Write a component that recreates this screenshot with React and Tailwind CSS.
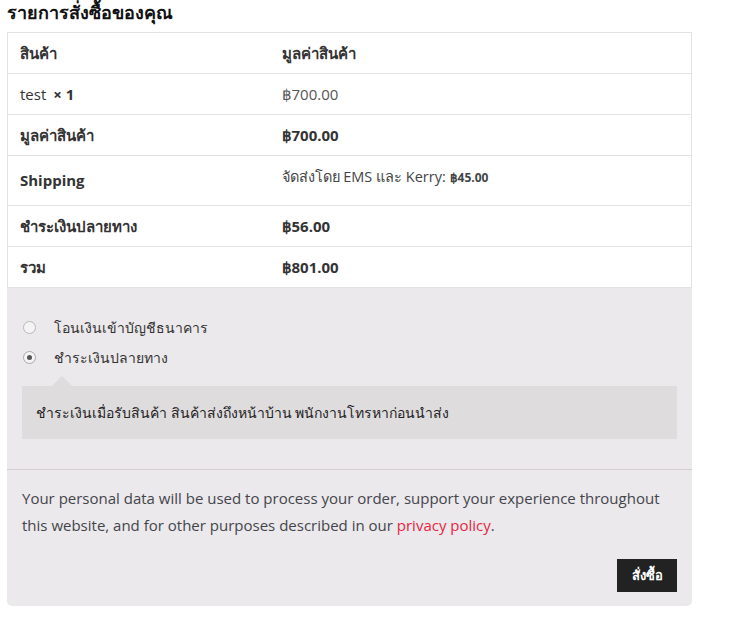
import React from "react";

const rows = [
  { label: "มูลค่าสินค้า", value: "฿700.00" },
];

export default function App() {
  return (
    <div
      className="w-[734px] h-[633px] bg-white text-[#333333]"
      style={{ fontFamily: '"Open Sans", "Noto Sans", sans-serif' }}
    >
      <div className="pl-[7px] w-[692px]">
        {/* Heading */}
        <h3 className="text-[18px] font-bold leading-[24px] h-[32px] text-[#111]">
          รายการสั่งซื้อของคุณ
        </h3>

        {/* Order table */}
        <table className="w-full border-collapse border border-[#e2e2e2] text-[15px] bg-white">
          <tbody>
            <tr className="h-[41px] border-b border-[#e2e2e2]">
              <th className="w-[274px] pl-[12px] text-left font-bold">สินค้า</th>
              <th className="text-left font-bold">มูลค่าสินค้า</th>
            </tr>
            <tr className="h-[41px] border-b border-[#e2e2e2]">
              <td className="pl-[12px]">
                test <span className="font-bold ml-[3px]">× 1</span>
              </td>
              <td className="text-[#555]">฿700.00</td>
            </tr>
            {rows.map((r) => (
              <tr key={r.label} className="h-[41px] border-b border-[#e2e2e2]">
                <th className="pl-[12px] text-left font-bold">{r.label}</th>
                <td className="font-bold">{r.value}</td>
              </tr>
            ))}
            <tr className="h-[50px] border-b border-[#e2e2e2]">
              <th className="pl-[12px] text-left font-bold text-[15px]">Shipping</th>
              <td className="align-top pt-[10px] text-[#444] text-[14.5px]">
                จัดส่งโดย EMS และ Kerry: <span className="text-[12px] font-bold">฿45.00</span>
              </td>
            </tr>
            <tr className="h-[41px] border-b border-[#e2e2e2]">
              <th className="pl-[12px] text-left font-bold">ชำระเงินปลายทาง</th>
              <td className="font-bold">฿56.00</td>
            </tr>
            <tr className="h-[41px]">
              <th className="pl-[12px] text-left font-bold">รวม</th>
              <td className="font-bold">฿801.00</td>
            </tr>
          </tbody>
        </table>

        {/* Payment */}
        <div className="bg-[#ebe9eb] rounded-b-[5px]">
          <div className="px-[15px] pt-[24px] pb-[30px] border-b border-[#d3ced2]">
            <ul className="text-[14px] text-[#333]">
              <li className="flex items-center h-[30px]">
                <span className="w-[13px] h-[13px] rounded-full border border-[#b9b9b9] bg-[#f4f4f4] ml-[1px]" />
                <span className="ml-[18px]">โอนเงินเข้าบัญชีธนาคาร</span>
              </li>
              <li className="flex items-center h-[30px]">
                <span className="w-[13px] h-[13px] rounded-full border border-[#a9a9a9] bg-[#f4f4f4] ml-[1px] flex items-center justify-center">
                  <span className="w-[5px] h-[5px] rounded-full bg-[#555]" />
                </span>
                <span className="ml-[18px]">ชำระเงินปลายทาง</span>
              </li>
            </ul>
            <div className="relative mt-[14px] bg-[#dfdcde] h-[53px] flex items-center px-[14px] text-[14px] text-[#222]">
              <span className="absolute -top-[10px] left-[30px] w-0 h-0 border-l-[10px] border-r-[10px] border-b-[10px] border-l-transparent border-r-transparent border-b-[#dfdcde]" />
              ชำระเงินเมื่อรับสินค้า สินค้าส่งถึงหน้าบ้าน พนักงานโทรหาก่อนนำส่ง
            </div>
          </div>
          <div className="px-[15px] pt-[15px] pb-[14px]">
            <p className="text-[15px] leading-[27px] text-[#43454b]">
              Your personal data will be used to process your order, support your experience throughout
              this website, and for other purposes described in our{" "}
              <a className="text-[#e7253f]">privacy policy</a>.
            </p>
            <div className="flex justify-end mt-[20px]">
              <button className="w-[60px] h-[33px] bg-[#222222] text-white text-[13px] font-bold">
                สั่งซื้อ
              </button>
            </div>
          </div>
        </div>
      </div>
    </div>
  );
}
